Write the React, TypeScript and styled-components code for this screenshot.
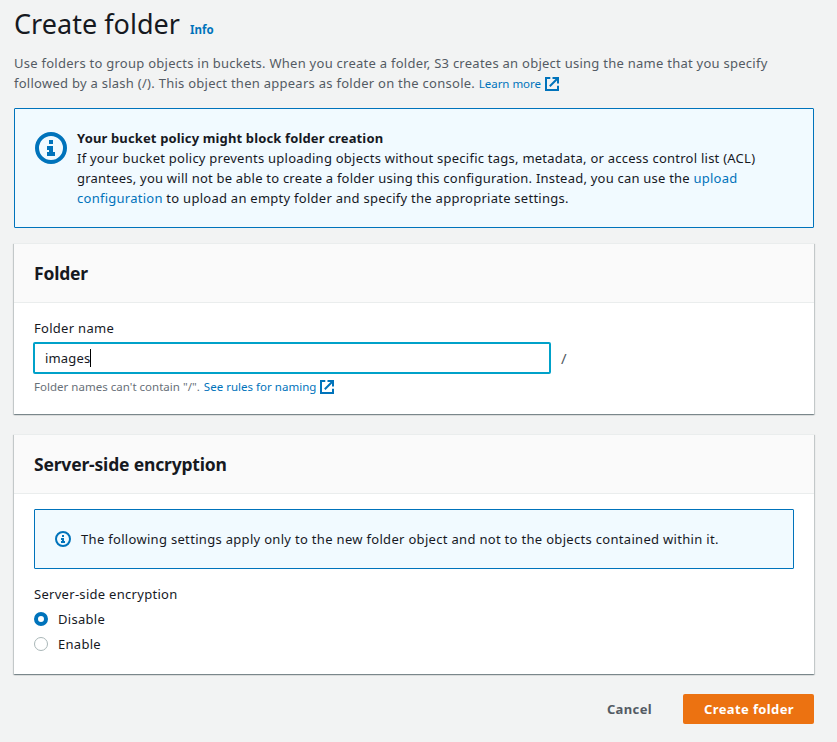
import React, { useState } from 'react';
import styled, { createGlobalStyle, css } from 'styled-components';

const color = {
  page: '#f2f3f3',
  text: '#16191f',
  muted: '#545b64',
  hint: '#687078',
  link: '#0073bb',
  infoBg: '#f1faff',
  divider: '#eaeded',
  focus: '#00a1c9',
  primary: '#ec7211',
};

const GlobalStyle = createGlobalStyle`
  *, *::before, *::after { box-sizing: border-box; }
  body {
    margin: 0;
    background: ${color.page};
    color: ${color.text};
    font-family: "Noto Sans", "Open Sans", sans-serif;
    font-size: 13px;
    line-height: 20px;
    letter-spacing: 0.25px;
  }
`;

const Page = styled.main`
  display: flex;
  flex-direction: column;
  width: 837px;
  height: 742px;
  padding: 4px 23px 18px 14px;
  overflow: hidden;
`;

const TitleRow = styled.header`
  display: flex;
  align-items: baseline;
  gap: 10px;
  height: 49px;
`;

const Title = styled.h1`
  margin: 0;
  font-size: 27px;
  font-weight: 400;
  line-height: 40px;
  letter-spacing: 0.03px;
`;

const InfoLink = styled.a`
  color: ${color.link};
  font-size: 11.5px;
  font-weight: 700;
  letter-spacing: 0;
`;

const Line = styled.span<{ $track?: number }>`
  display: block;
  white-space: nowrap;
  ${({ $track }) => $track !== undefined && css`letter-spacing: ${$track}px;`}
`;

const Description = styled.p`
  margin: 0 0 15px;
  color: ${color.muted};
`;

const Link = styled.a`
  color: ${color.link};
  text-decoration: none;
`;

const SmallLink = styled(Link)`
  display: inline-flex;
  align-items: center;
  gap: 4px;
  font-size: 11.5px;
  letter-spacing: -0.03px;
  height: 16px;
  vertical-align: baseline;
`;

const ExternalSvg = styled.svg`
  flex: none;
  width: 14px;
  height: 14px;
`;

const Alert = styled.section<{ $large?: boolean }>`
  display: flex;
  align-items: ${({ $large }) => ($large ? 'flex-start' : 'center')};
  gap: 10px;
  height: ${({ $large }) => ($large ? 120 : 60)}px;
  padding: 19px 20px;
  border: 1px solid ${color.link};
  border-radius: 1px;
  background: ${color.infoBg};
`;

const InfoSvg = styled.svg<{ $size: number }>`
  flex: none;
  width: ${({ $size }) => $size}px;
  height: ${({ $size }) => $size}px;
  margin-top: ${({ $size }) => ($size > 16 ? 4 : 0)}px;
`;

const AlertText = styled.div`
  flex: 1;
`;

const AlertTitle = styled.strong`
  display: block;
  font-weight: 700;
  letter-spacing: 0.14px;
`;

const Card = styled.section<{ $height: number; $gap: number }>`
  flex: none;
  height: ${({ $height }) => $height}px;
  margin-top: ${({ $gap }) => $gap}px;
  border-top: 1px solid ${color.divider};
  background: #fff;
  box-shadow:
    0 1px 1px 0 rgba(0, 28, 36, 0.3),
    1px 1px 1px 0 rgba(0, 28, 36, 0.15),
    -1px 1px 1px 0 rgba(0, 28, 36, 0.15);
`;

const CardHeader = styled.div`
  display: flex;
  align-items: center;
  height: 59px;
  padding: 0 20px;
  border-bottom: 1px solid ${color.divider};
  background: #fafafa;
`;

const CardTitle = styled.h2`
  margin: 0;
  font-size: 17.5px;
  font-weight: 700;
  line-height: 22px;
  letter-spacing: -0.18px;
`;

const CardBody = styled.div`
  padding: 15px 20px;
`;

const Label = styled.label<{ $top?: number }>`
  display: block;
  margin-top: ${({ $top }) => $top ?? 0}px;
  letter-spacing: 0.29px;
`;

const NameRow = styled.div`
  display: flex;
  align-items: center;
  gap: 10px;
  margin: 4px 0 5px -1px;
  color: ${color.muted};
`;

const Slash = styled.span`
  font-size: 15px;
`;

const Field = styled.div`
  display: flex;
  align-items: center;
  width: 518px;
  height: 32px;
  padding: 0 10px;
  border: 2px solid ${color.focus};
  border-radius: 2px;
  background: #fff;
  color: ${color.text};
  letter-spacing: 0.15px;
`;

const Caret = styled.span`
  width: 1px;
  height: 18px;
  background: #000;
`;

const Hint = styled.div`
  display: flex;
  align-items: center;
  gap: 4px;
  height: 16px;
  color: ${color.hint};
  font-size: 11.5px;
  letter-spacing: 0.02px;
  line-height: 16px;
  white-space: nowrap;
`;

const HintLink = styled(SmallLink)`
  letter-spacing: 0.02px;
`;

const Option = styled.label`
  display: flex;
  align-items: center;
  gap: 10px;
  height: 20px;
  margin-top: 5px;
  letter-spacing: 0.28px;
`;

const Radio = styled.input.attrs({ type: 'radio' })`
  appearance: none;
  flex: none;
  width: 14px;
  height: 14px;
  margin: 0;
  border: 1px solid #aab7b8;
  border-radius: 50%;
  background: #fff;

  &:checked {
    border: 4px solid ${color.link};
  }
`;

const Actions = styled.footer`
  display: flex;
  justify-content: flex-end;
  margin-top: 20px;
`;

const Button = styled.button<{ $primary?: boolean }>`
  height: 30px;
  width: ${({ $primary }) => ($primary ? 131 : 88)}px;
  margin-left: 10px;
  padding: 0 0 0 1px;
  border: 0;
  border-radius: 2px;
  background: ${({ $primary }) => ($primary ? color.primary : 'transparent')};
  color: ${({ $primary }) => ($primary ? '#fff' : color.muted)};
  font: inherit;
  font-weight: 700;
  letter-spacing: 0.38px;
`;

const ExternalIcon = () => (
  <ExternalSvg viewBox="0 0 14 14" fill="none" stroke={color.link} strokeWidth="2">
    <path d="M5.3 1H1v12h12V8.7" />
    <path d="M7.5 1H13v5.5M13 1L4.8 9.2" />
  </ExternalSvg>
);

const InfoIcon = ({ size }: { size: number }) => (
  <InfoSvg $size={size} viewBox="0 0 16 16">
    <circle cx="8" cy="8" r="7" fill="none" stroke={color.link} strokeWidth="2" />
    <path d="M7 4h2v2H7zM6 7h3v3h1v2H6v-2h1V9H6z" fill={color.link} />
  </InfoSvg>
);

export default function App() {
  const [encryption, setEncryption] = useState('Disable');

  return (
    <>
      <GlobalStyle />
      <Page>
        <TitleRow>
          <Title>Create folder</Title>
          <InfoLink>Info</InfoLink>
        </TitleRow>
        <Description>
          <Line $track={0.257}>
            Use folders to group objects in buckets. When you create a folder, S3 creates an object using the name that you specify
          </Line>
          <Line $track={0.265}>
            followed by a slash (/). This object then appears as folder on the console.{' '}
            <SmallLink>
              Learn more <ExternalIcon />
            </SmallLink>
          </Line>
        </Description>

        <Alert $large>
          <InfoIcon size={32} />
          <AlertText>
            <AlertTitle>Your bucket policy might block folder creation</AlertTitle>
            <Line $track={0.245}>
              If your bucket policy prevents uploading objects without specific tags, metadata, or access control list (ACL)
            </Line>
            <Line $track={0.22}>
              grantees, you will not be able to create a folder using this configuration. Instead, you can use the{' '}
              <Link>upload</Link>
            </Line>
            <Line $track={0.26}>
              <Link>configuration</Link> to upload an empty folder and specify the appropriate settings.
            </Line>
          </AlertText>
        </Alert>

        <Card $height={171} $gap={15}>
          <CardHeader>
            <CardTitle>Folder</CardTitle>
          </CardHeader>
          <CardBody>
            <Label>Folder name</Label>
            <NameRow>
              <Field>
                images
                <Caret />
              </Field>
              <Slash>/</Slash>
            </NameRow>
            <Hint>
              Folder names can't contain "/".
              <HintLink>
                See rules for naming <ExternalIcon />
              </HintLink>
            </Hint>
          </CardBody>
        </Card>

        <Card $height={240} $gap={20}>
          <CardHeader>
            <CardTitle>Server-side encryption</CardTitle>
          </CardHeader>
          <CardBody>
            <Alert>
              <InfoIcon size={16} />
              <Line $track={0.31}>
                The following settings apply only to the new folder object and not to the objects contained within it.
              </Line>
            </Alert>
            <Label as="div" $top={15}>Server-side encryption</Label>
            {['Disable', 'Enable'].map((name) => (
              <Option key={name}>
                <Radio name="encryption" checked={encryption === name} onChange={() => setEncryption(name)} />
                {name}
              </Option>
            ))}
          </CardBody>
        </Card>

        <Actions>
          <Button>Cancel</Button>
          <Button $primary>Create folder</Button>
        </Actions>
      </Page>
    </>
  );
}
